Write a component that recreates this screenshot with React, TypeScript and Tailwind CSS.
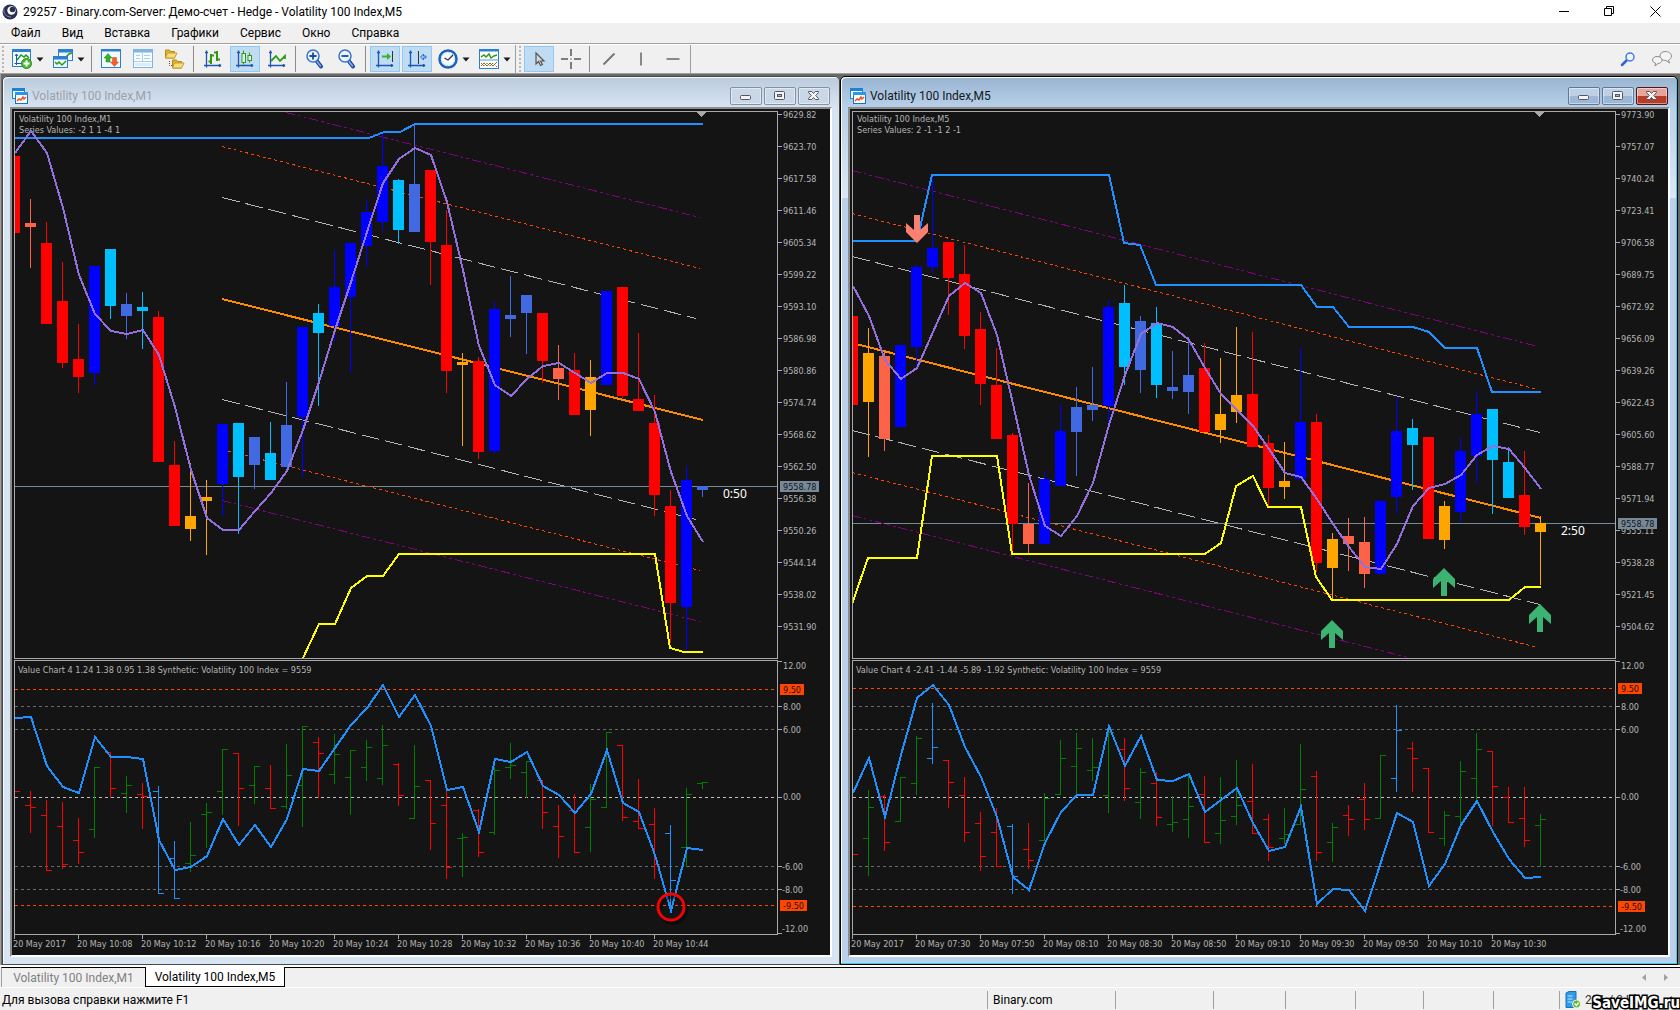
import type { ReactNode } from "react";
import clsx from "clsx";

type Candle = [color: string, high: number, top: number, bottom: number, low: number];
type Bar = [color: string, high: number, low: number, open: number, close: number];
type Point = [x: number, y: number];
type Trend = [x1: number, y1: number, x2: number, y2: number];

interface Arrow {
  x: number;
  y: number;
  down?: boolean;
}

interface ChartData {
  title: string;
  series: string;
  indicator: string;
  timer: string;
  priceY: number;
  prices: string[];
  times: string[];
  candles: Candle[];
  upper: Point[];
  lower: Point[];
  average: number[];
  middle: Trend;
  grey: Trend[];
  orange: Trend[];
  purple: Trend[];
  levels: [number, number];
  bars: Bar[];
  value: number[];
  arrows: Arrow[];
  circle?: Point;
}

// Bars are spaced evenly, one every STEP pixels
const STEP = 16;
const PLOT_W = 763;

const R = "#ff0000";
const B = "#0000ff";
const S = "#00bfff";
const Y = "#4169e1";
const T = "#ff6347";
const O = "#ffa500";
const G = "#008000";
const D = "#1e90ff";

const m1: ChartData = {
  title: "Volatility 100 Index,M1",
  series: "Series Values: -2 1 1 -4 1",
  indicator: "Value Chart 4 1.24 1.38 0.95 1.38 Synthetic: Volatility 100 Index = 9559",
  timer: "0:50",
  priceY: 375,
  prices: [
    "9629.82", "9623.70", "9617.58", "9611.46", "9605.34", "9599.22", "9593.10", "9586.98", "9580.86",
    "9574.74", "9568.62", "9562.50", "9556.38", "9550.26", "9544.14", "9538.02", "9531.90",
  ],
  times: ["2017", "10:08", "10:12", "10:16", "10:20", "10:24", "10:28", "10:32", "10:36", "10:40", "10:44"],
  candles: [
    [R, 45, 45, 122, 122], [T, 88, 112, 116, 157], [R, 111, 132, 213, 213], [R, 151, 190, 252, 257],
    [R, 213, 248, 266, 282], [B, 155, 155, 262, 274], [S, 138, 138, 195, 208], [Y, 182, 193, 205, 228],
    [S, 181, 196, 200, 238], [R, 200, 206, 351, 351], [R, 330, 354, 415, 415], [O, 352, 405, 418, 430],
    [O, 369, 386, 390, 444], [B, 313, 313, 373, 405], [S, 312, 312, 366, 423], [Y, 326, 326, 354, 378],
    [S, 311, 342, 369, 369], [Y, 271, 314, 356, 356], [B, 216, 216, 306, 366], [S, 193, 202, 222, 295],
    [B, 139, 176, 215, 230], [B, 132, 132, 186, 262], [B, 89, 101, 135, 156], [B, 21, 55, 111, 120],
    [S, 68, 69, 119, 133], [Y, 14, 73, 121, 121], [R, 59, 59, 131, 174], [R, 99, 134, 260, 282],
    [O, 242, 251, 254, 335], [R, 246, 250, 341, 348], [B, 191, 198, 340, 343], [Y, 165, 204, 208, 226],
    [Y, 184, 184, 202, 243], [R, 202, 202, 250, 272], [T, 234, 257, 268, 289], [R, 242, 259, 304, 304],
    [O, 249, 266, 299, 325], [B, 180, 180, 274, 274], [R, 176, 176, 285, 287], [R, 222, 288, 300, 300],
    [R, 284, 312, 384, 405], [R, 379, 395, 492, 532], [B, 355, 369, 496, 540], [Y, 375, 375, 379, 386],
  ],
  upper: [[0, 27], [355, 27], [370, 21], [386, 21], [401, 13], [689, 13]],
  lower: [
    [289, 547], [305, 513], [321, 513], [337, 477], [353, 465], [369, 465], [385, 443],
    [641, 443], [656, 537], [670, 541], [689, 541],
  ],
  average: [
    42, 20, 42, 97, 164, 203, 220, 223, 219, 244, 296, 359, 407, 419, 419, 400, 382, 360, 319, 271, 219, 171,
    121, 72, 48, 37, 44, 91, 159, 235, 274, 285, 268, 255, 252, 262, 272, 262, 262, 268, 301, 361, 405, 431,
  ],
  middle: [208, 188, 689, 309],
  grey: [[208, 86, 682, 207], [208, 288, 682, 408]],
  orange: [[208, 35, 686, 157], [208, 338, 686, 459]],
  purple: [[272, 1, 686, 106], [208, 389, 686, 510]],
  levels: [578, 794],
  bars: [
    [R, 680, 680, 680, 680], [R, 680, 721, 694, 696], [R, 689, 759, 704, 759], [R, 691, 757, 715, 753],
    [R, 707, 752, 729, 741], [G, 656, 726, 718, 656], [R, 641, 686, 641, 677], [G, 665, 701, 682, 674],
    [R, 672, 717, 683, 685], [D, 675, 782, 680, 782], [D, 730, 787, 747, 787], [G, 711, 760, 752, 744],
    [G, 692, 736, 703, 701], [G, 638, 703, 680, 638], [R, 642, 714, 642, 677], [G, 655, 692, 674, 655],
    [R, 654, 697, 677, 697], [G, 633, 697, 695, 664], [G, 615, 715, 674, 615], [R, 626, 686, 631, 642],
    [G, 623, 672, 663, 643], [G, 639, 703, 666, 639], [G, 629, 669, 656, 636], [G, 614, 673, 667, 634],
    [R, 652, 694, 653, 684], [G, 634, 707, 707, 675], [R, 669, 738, 669, 712], [R, 680, 767, 694, 756],
    [G, 722, 765, 727, 726], [R, 698, 745, 699, 741], [G, 656, 723, 721, 659], [G, 632, 667, 656, 654],
    [G, 650, 686, 661, 650], [R, 669, 717, 669, 701], [R, 694, 746, 715, 725], [R, 683, 741, 699, 741],
    [G, 673, 740, 716, 688], [G, 621, 696, 696, 621], [R, 634, 709, 634, 706], [R, 668, 717, 710, 717],
    [R, 697, 767, 713, 753], [D, 714, 799, 722, 769], [G, 677, 755, 736, 683], [G, 671, 677, 672, 671],
  ],
  value: [
    607, 606, 655, 676, 682, 626, 646, 646, 648, 729, 759, 756, 745, 708, 734, 714, 736, 708, 658, 660, 637, 614,
    597, 574, 606, 584, 615, 679, 676, 721, 648, 651, 641, 675, 684, 702, 683, 639, 692, 701, 744, 800, 737, 739,
  ],
  arrows: [],
  circle: [657, 796],
};

const m5: ChartData = {
  title: "Volatility 100 Index,M5",
  series: "Series Values: 2 -1 -1 2 -1",
  indicator: "Value Chart 4 -2.41 -1.44 -5.89 -1.92 Synthetic: Volatility 100 Index = 9559",
  timer: "2:50",
  priceY: 412,
  prices: [
    "9773.90", "9757.07", "9740.24", "9723.41", "9706.58", "9689.75", "9672.92", "9656.09", "9639.26",
    "9622.43", "9605.60", "9588.77", "9571.94", "9555.11", "9538.28", "9521.45", "9504.62",
  ],
  times: ["2017", "07:30", "07:50", "08:10", "08:30", "08:50", "09:10", "09:30", "09:50", "10:10", "10:30"],
  candles: [
    [R, 205, 205, 294, 294], [O, 217, 242, 291, 346], [T, 241, 245, 328, 340], [B, 234, 234, 316, 316],
    [B, 153, 156, 236, 255], [B, 66, 137, 156, 162], [R, 131, 131, 167, 204], [R, 134, 163, 225, 238],
    [R, 201, 218, 273, 294], [R, 237, 274, 328, 328], [R, 322, 324, 413, 443], [T, 372, 413, 433, 442],
    [B, 361, 368, 433, 433], [B, 293, 320, 375, 375], [Y, 276, 296, 321, 365], [Y, 256, 294, 299, 310],
    [B, 189, 196, 295, 317], [S, 174, 192, 256, 274], [Y, 205, 210, 259, 282], [S, 196, 212, 274, 287],
    [Y, 240, 276, 280, 288], [Y, 226, 264, 281, 303], [R, 232, 257, 321, 321], [O, 247, 303, 319, 332],
    [O, 216, 284, 301, 312], [R, 221, 283, 336, 336], [R, 324, 332, 377, 395], [O, 331, 370, 376, 388],
    [B, 237, 311, 368, 368], [R, 303, 311, 452, 461], [O, 422, 428, 457, 489], [T, 407, 425, 433, 460],
    [T, 406, 431, 463, 477], [B, 390, 390, 463, 463], [B, 286, 320, 386, 402], [S, 308, 317, 334, 379],
    [R, 326, 326, 428, 428], [O, 390, 395, 429, 438], [B, 327, 340, 401, 411], [B, 281, 303, 345, 372],
    [S, 298, 298, 349, 403], [S, 336, 351, 387, 387], [R, 340, 384, 416, 424], [O, 405, 412, 421, 474],
  ],
  upper: [
    [0, 130], [65, 130], [80, 64], [257, 64], [272, 132], [288, 134], [304, 174], [449, 174], [465, 196],
    [481, 196], [497, 216], [561, 216], [577, 221], [593, 237], [625, 237], [640, 281], [689, 281],
  ],
  lower: [
    [0, 493], [16, 447], [65, 447], [80, 345], [145, 345], [160, 443], [353, 443], [369, 432], [384, 375],
    [401, 365], [416, 396], [449, 396], [464, 466], [480, 489], [657, 489], [673, 476], [689, 476],
  ],
  average: [
    175, 205, 249, 268, 257, 221, 185, 172, 182, 224, 293, 364, 415, 425, 405, 372, 314, 264, 223, 212, 216, 229,
    257, 283, 299, 315, 338, 362, 366, 388, 413, 436, 456, 458, 433, 395, 377, 373, 364, 344, 335, 338, 357, 378,
  ],
  middle: [0, 232, 689, 407],
  grey: [[0, 145, 688, 321], [0, 319, 688, 493]],
  orange: [[0, 102, 686, 278], [0, 361, 686, 536]],
  purple: [[0, 59, 686, 235], [0, 404, 560, 547]],
  levels: [577, 795],
  bars: [
    [R, 743, 743, 743, 743], [G, 679, 764, 727, 696], [R, 683, 739, 685, 731], [G, 666, 710, 710, 666],
    [G, 625, 683, 672, 627], [D, 592, 652, 647, 636], [R, 649, 696, 649, 671], [R, 666, 730, 684, 721],
    [R, 701, 759, 712, 745], [R, 697, 755, 721, 755], [D, 713, 782, 715, 765], [R, 712, 757, 738, 749],
    [G, 682, 729, 729, 687], [G, 629, 683, 683, 647], [G, 622, 683, 655, 637], [G, 627, 669, 659, 656],
    [G, 616, 701, 684, 621], [R, 627, 689, 638, 677], [G, 657, 707, 691, 661], [R, 661, 714, 672, 706],
    [G, 685, 720, 713, 711], [G, 664, 726, 708, 695], [R, 665, 731, 683, 731], [G, 666, 732, 722, 709],
    [G, 649, 713, 705, 694], [R, 653, 722, 690, 722], [R, 703, 749, 708, 736], [G, 697, 732, 727, 723],
    [G, 633, 713, 713, 678], [R, 660, 749, 665, 741], [G, 712, 750, 731, 716], [R, 694, 724, 704, 708],
    [R, 672, 718, 688, 708], [G, 644, 707, 707, 644], [D, 594, 680, 667, 619], [R, 631, 680, 637, 647],
    [R, 657, 721, 657, 721], [G, 700, 734, 727, 704], [G, 650, 716, 705, 660], [G, 622, 689, 667, 638],
    [R, 640, 714, 640, 675], [R, 676, 711, 686, 711], [R, 676, 735, 707, 729], [G, 703, 755, 714, 708],
  ],
  value: [
    682, 647, 706, 644, 587, 574, 594, 636, 666, 706, 766, 779, 732, 701, 684, 684, 615, 655, 625, 669, 670, 663,
    701, 689, 677, 712, 740, 736, 696, 793, 778, 779, 800, 751, 702, 711, 775, 753, 714, 690, 721, 748, 767, 766,
  ],
  arrows: [
    { x: 65, y: 132, down: true },
    { x: 480, y: 509 },
    { x: 592, y: 457 },
    { x: 688, y: 493 },
  ],
};

function toPoints(points: Point[]) {
  return points.map((p) => p.join(",")).join(" ");
}

function spread(values: number[]) {
  return toPoints(values.map((v, i) => [i * STEP + 1, v]));
}

function TrendLines({ lines, color, dash }: { lines: Trend[]; color: string; dash: string }) {
  return (
    <>
      {lines.map(([x1, y1, x2, y2]) => (
        <line key={y1} x1={x1} y1={y1 + 0.5} x2={x2} y2={y2 + 0.5} stroke={color} strokeDasharray={dash} />
      ))}
    </>
  );
}

function Level({ y, color }: { y: number; color: string }) {
  return <line x1="1" x2={PLOT_W} y1={y + 0.5} y2={y + 0.5} stroke={color} strokeDasharray="3 3" />;
}

function Tag({ y, width, color, text }: { y: number; width: number; color: string; text: string }) {
  return (
    <g>
      <rect x="766" y={y - 5} width={width} height="11" fill={color} />
      <text x="769" y={y + 4} className="fill-[#141414]">{text}</text>
    </g>
  );
}

function Chart({ data }: { data: ChartData }) {
  const clip = `plot-${data.timer.replace(":", "")}`;
  const [high, low] = data.levels;

  return (
    <svg
      className="block h-full w-full bg-[#141414] fill-[#b4b4b4] font-['DejaVu_Sans_Condensed','DejaVu_Sans',sans-serif] text-[9px]"
      shapeRendering="crispEdges"
      role="img"
      aria-label={data.title}
    >
      <defs>
        <clipPath id={clip}>
          <rect x="1" y="1" width={PLOT_W - 1} height="546" />
          <rect x="1" y="550" width={PLOT_W - 1} height="273" />
        </clipPath>
      </defs>
      <g transform="translate(2 2)">
        {/* Pane frames */}
        <g fill="none" stroke="#a9a9a9">
          <rect x="0.5" y="0.5" width={PLOT_W} height="547" />
          <rect x="0.5" y="549.5" width={PLOT_W} height="274" />
        </g>
        <text x="5" y="11">{data.title}</text>
        <text x="5" y="22">{data.series}</text>
        <text x="4" y="562">{data.indicator}</text>

        <g clipPath={`url(#${clip})`} fill="none">
          <line x1="1" x2={PLOT_W} y1={data.priceY + 0.5} y2={data.priceY + 0.5} stroke="#778899" />
          <TrendLines lines={data.purple} color="#800080" dash="9 3 3 3 3 3" />
          <TrendLines lines={data.orange} color="#ff4500" dash="3 3" />
          <TrendLines lines={data.grey} color="#b4b4b4" dash="18 6" />
          <polyline
            points={toPoints([[data.middle[0], data.middle[1]], [data.middle[2], data.middle[3]]])}
            stroke="#ff8c00"
            strokeWidth="2"
          />
          {data.candles.map(([color, top, open, close, bottom], i) => (
            <g key={i} fill={color}>
              <rect x={i * STEP} y={top} width="1" height={bottom - top} />
              <rect x={i * STEP - 5} y={open} width="11" height={close - open} />
            </g>
          ))}
          <polyline points={toPoints(data.upper)} stroke="#1e90ff" strokeWidth="2" />
          <polyline points={toPoints(data.lower)} stroke="#ffff00" strokeWidth="2" />
          <polyline points={spread(data.average)} stroke="#9370db" strokeWidth="2" />

          {/* Value chart */}
          <Level y={high} color="#ff4500" />
          <Level y={595} color="#696969" />
          <Level y={618} color="#696969" />
          <Level y={686} color="#c0c0c0" />
          <Level y={755} color="#696969" />
          <Level y={778} color="#696969" />
          <Level y={low} color="#ff4500" />
          {data.bars.map(([color, top, bottom, open, close], i) => (
            <g key={i} fill={color}>
              <rect x={i * STEP} y={top} width="1" height={bottom - top + 1} />
              <rect x={i * STEP - 5} y={open} width="5" height="1" />
              <rect x={i * STEP + 1} y={close} width="5" height="1" />
            </g>
          ))}
          <polyline points={spread(data.value)} stroke="#1e90ff" strokeWidth="2" />
        </g>

        <path d="M682 1h10l-5 5z" fill="#a9a9a9" />
        {data.arrows.map((a) => (
          <path
            key={a.x}
            transform={`translate(${a.x} ${a.y}) scale(1 ${a.down ? -1 : 1})`}
            d="M0 0L11 11V20L3 13V28H-3V13L-11 20V11Z"
            fill={a.down ? "#fa8072" : "#3cb371"}
            shapeRendering="auto"
          />
        ))}
        {data.circle && (
          <g shapeRendering="auto" fill="none">
            <circle cx={data.circle[0] + 2} cy={data.circle[1] + 3} r="13" stroke="#000" strokeOpacity="0.4" strokeWidth="4" />
            <circle cx={data.circle[0]} cy={data.circle[1]} r="13" stroke="#f00404" strokeWidth="3" />
          </g>
        )}
        <text x="709" y={data.priceY + 12} className="fill-white font-['Noto_Sans',sans-serif] text-[12px]">
          {data.timer}
        </text>

        {/* Price scale */}
        {data.prices.map((p, i) => (
          <g key={p}>
            <rect x={PLOT_W + 1} y={i * 32 + 3} width="4" height="1" fill="#a9a9a9" />
            <text x="769" y={i * 32 + 7}>{p}</text>
          </g>
        ))}
        <Tag y={data.priceY} width={39} color="#778899" text="9558.78" />
        {[550, 595, 618, 686, 755, 778, 822].map((y) => (
          <rect key={y} x={PLOT_W + 1} y={y} width="4" height="1" fill="#a9a9a9" />
        ))}
        <text x="769" y="558">12.00</text>
        <text x="769" y="599">8.00</text>
        <text x="769" y="622">6.00</text>
        <text x="769" y="689">0.00</text>
        <text x="768" y="759">-6.00</text>
        <text x="768" y="782">-8.00</text>
        <text x="768" y="821">-12.00</text>
        <Tag y={high} width={24} color="#ff4500" text="9.50" />
        <Tag y={low} width={27} color="#ff4500" text="-9.50" />

        {/* Time scale */}
        {data.times.map((t, i) => (
          <g key={t}>
            <rect x={i * 64} y="824" width="1" height="4" fill="#a9a9a9" />
            <text x={i * 64 - 1} y="836">20 May {t}</text>
          </g>
        ))}
      </g>
    </svg>
  );
}

function ChartIcon() {
  return (
    <svg width="16" height="16" viewBox="0 0 16 16" aria-hidden="true">
      <rect x="0.5" y="0.5" width="12" height="10" fill="#fff" stroke="#1883d7" />
      <rect x="0" y="0" width="13" height="3" fill="#1883d7" />
      <rect x="3.5" y="4.5" width="12" height="11" fill="#fff" stroke="#1274c8" />
      <rect x="3" y="4" width="13" height="3" fill="#2a96ea" />
      <path d="M5 13l2-2 2 1 2-3 1 2 2-2" fill="none" stroke="#f0541e" strokeWidth="1.5" />
    </svg>
  );
}

function WindowButton({ label, active, close, children }: { label: string; active: boolean; close?: boolean; children: ReactNode }) {
  return (
    <button
      aria-label={label}
      className={clsx(
        "flex h-[18px] w-8 items-center justify-center rounded-[2px] border shadow-[inset_0_0_0_1px_rgba(255,255,255,0.45)]",
        active && close && "border-[#4c1520] bg-linear-to-b from-[#e6a59b] from-50% to-[#b53c26] to-50%",
        active && !close && "border-[#5f7899] bg-linear-to-b from-[#bdd0e6] from-50% to-[#9db8d6] to-50%",
        !active && "border-[#8391a9] bg-[#c9d7e6]",
      )}
    >
      <svg width="14" height="12" viewBox="0 0 14 12" fill="#f4f4f4" stroke="#535666" aria-hidden="true">
        {children}
      </svg>
    </button>
  );
}

function ChartWindow({ data, active }: { data: ChartData; active: boolean }) {
  return (
    <section
      className={clsx(
        "flex min-w-0 flex-1 flex-col rounded-t-[5px] border px-[7px] pb-[7px]",
        active
          ? "border-black bg-[linear-gradient(to_bottom,#99b4d1_0px,#b9d1ea_31px,#dbe8f5_121px,#b9d1ea_121px)] shadow-[inset_-1px_-1px_0_#35d0ec,inset_1px_1px_0_#fff]"
          : "border-[#4a4a4a] bg-[#d7e4f2] bg-[linear-gradient(to_bottom,#bccbdc_0px,#d7e4f2_31px)] shadow-[inset_1px_1px_0_#f4f8fc]",
      )}
    >
      <header className="flex h-[30px] shrink-0 items-center gap-1 pr-[2px] pl-[2px] pt-[8px]">
        <ChartIcon />
        <h2 className={clsx("flex-1 text-[12px] leading-4", active ? "text-[#101820]" : "text-[#9aa0a8]")}>{data.title}</h2>
        <div className="flex gap-[2px]">
          <WindowButton label="Свернуть" active={active}>
            <rect x="1.5" y="5.5" width="10" height="4" rx="1" />
          </WindowButton>
          <WindowButton label="Развернуть" active={active}>
            <rect x="1.5" y="1.5" width="10" height="8" rx="1" />
            <rect x="4.5" y="4.5" width="4" height="2" fill="#9db8d6" />
          </WindowButton>
          <WindowButton label="Закрыть" active={active} close>
            <path d="M1.500 1.500h3.200L6.500 3.500l1.800-2h3.200v1L8.700 5.500l2.800 3v1H8.300L6.500 7.500l-1.800 2H1.500v-1l2.800-3-2.800-3z" />
          </WindowButton>
        </div>
      </header>
      <div className="min-h-0 flex-1 border-2 border-t-[#8c8c8c] border-r-white border-b-white border-l-[#8c8c8c]">
        <Chart data={data} />
      </div>
    </section>
  );
}

function ToolButton({ label, active, menu, children }: { label: string; active?: boolean; menu?: boolean; children: ReactNode }) {
  return (
    <button
      aria-label={label}
      className={clsx(
        "flex h-[26px] items-center",
        menu ? "w-[41px] gap-1 pl-[5px]" : "mx-px w-[30px] justify-center border",
        !menu && (active ? "border-[#90c8f6] bg-[#c0dcf3]" : "border-transparent"),
      )}
    >
      <svg width="20" height="20" viewBox="0 0 20 20" fill="none" aria-hidden="true">
        {children}
      </svg>
      {menu && (
        <svg width="8" height="5" viewBox="0 0 8 5" fill="#1a1a1a" aria-hidden="true">
          <path d="M0.500 0.500h7L4 4.500z" />
        </svg>
      )}
    </button>
  );
}

function Separator() {
  return <span className="mr-[3px] ml-[2px] h-[26px] w-px bg-[#8c8c8c]" />;
}

function Grip() {
  return <span className="h-[26px] w-[3px] border-l-2 border-dotted border-[#b8b8b8]" />;
}

function Axes() {
  return (
    <path
      d="M3.500 1.500v17M1 16.500h17M2 3.500h3M16.500 15v3M17.500 15.500v2"
      stroke="#1f55b5"
      strokeWidth="1.300"
    />
  );
}

function Magnifier({ plus }: { plus?: boolean }) {
  return (
    <>
      <path d="M11 11l5 6.500" stroke="#1c4a9e" strokeWidth="4" strokeLinecap="round" />
      <path d="M12 12.500l3.500 4.500" stroke="#7fb2ee" strokeWidth="1.500" strokeLinecap="round" />
      <circle cx="8" cy="7" r="6" fill="#e8f3fe" stroke="#3b74c6" strokeWidth="1.500" />
      <path d={plus ? "M4.500 7h7M8 3.500v7" : "M4.500 7h7"} stroke="#1c4a9e" strokeWidth="1.800" />
    </>
  );
}

function Folder({ x, y }: { x: number; y: number }) {
  return (
    <g transform={`translate(${x} ${y})`}>
      <path d="M0.500 1h4l1 1.500h4V9h-9z" fill="#e0b52e" stroke="#b38a1c" />
      <path d="M2.500 4h9.500L9.500 9h-9z" fill="#f7de7c" stroke="#c59c28" />
    </g>
  );
}

function Toolbar() {
  return (
    <div className="flex h-[29px] items-center border-t border-white bg-[#f0f0f0] pl-[2px]">
      <Grip />
      <span className="w-[2px]" />
      <ToolButton label="Новый график" menu>
        <rect x="0.500" y="0.500" width="18" height="17" fill="#f4faff" stroke="#2d7fd0" />
        <path d="M0 1.500h19" stroke="#2d7fd0" strokeWidth="3" />
        <path d="M4.500 5v11M2.500 14.500h9M3 7l1.500-2L6 7" stroke="#1f55b5" />
        <path d="M5 11l4-5 3 2 2-2 3 3" stroke="#1f9a1f" strokeWidth="1.500" />
        <circle cx="14.500" cy="14.500" r="5" fill="#4bb92f" stroke="#2f8a1c" />
        <path d="M14.500 11.500v6M11.500 14.500h6" stroke="#fff" strokeWidth="2" />
      </ToolButton>
      <ToolButton label="Профили" menu>
        <rect x="5.500" y="0.500" width="14" height="11" fill="#eef7ff" stroke="#2d7fd0" />
        <path d="M5 2h15" stroke="#2d7fd0" strokeWidth="3" />
        <path d="M12 9l4-4 3-1" stroke="#2f9a10" strokeWidth="1.500" />
        <rect x="0.500" y="7.500" width="14" height="11" fill="#eef7ff" stroke="#2d7fd0" />
        <path d="M0 9h15" stroke="#2d7fd0" strokeWidth="3" />
        <path d="M2 13l2 2 2-2 3 3 4-4" stroke="#2f9a10" strokeWidth="1.500" />
      </ToolButton>
      <Separator />
      <ToolButton label="Обзор рынка">
        <rect x="0.500" y="0.500" width="19" height="18" fill="#f2f9ff" stroke="#2d7fd0" />
        <path d="M0 1.500h20" stroke="#2d7fd0" strokeWidth="2" />
        <path d="M7 4.500l4 4.500H9v4H5V9H3z" fill="#35b32a" stroke="#1e8a18" strokeWidth="0.500" />
        <path d="M13.500 17.500L9.500 13h2V8.500h4V13h2z" fill="#f4602f" stroke="#c93e14" strokeWidth="0.500" />
      </ToolButton>
      <ToolButton label="Окно данных">
        <rect x="0.500" y="0.500" width="19" height="18" fill="#f8fcff" stroke="#7db5e6" />
        <path d="M0 2h20" stroke="#7db5e6" strokeWidth="3" />
        <path d="M9.500 3v9M1 12.500h18M3 6.500h4M3 9.500h4M11 6.500h6M11 9.500h6" stroke="#a9cdee" />
        <rect x="2" y="14" width="16" height="3" fill="#dcecf9" />
      </ToolButton>
      <ToolButton label="Навигатор">
        <Folder x={0} y={0} />
        <Folder x={7} y={10} />
        <path d="M4.500 12v4.500H7" stroke="#555" strokeDasharray="1 1" />
      </ToolButton>
      <Separator />
      <ToolButton label="Бары">
        <Axes />
        <path d="M8 5v10M5.500 12.500H8M8 6.500h3M14 2v10M14 3.500h-3M14 10.500h3" stroke="#2f9a10" strokeWidth="2" />
      </ToolButton>
      <ToolButton label="Свечи" active>
        <Axes />
        <path d="M8.500 1.500v14M14.500 3.500v10" stroke="#2f9a10" />
        <rect x="7" y="4.500" width="3.500" height="9" fill="#dff0fb" stroke="#2f9a10" />
        <rect x="13" y="6.500" width="3.500" height="5" fill="#dff0fb" stroke="#2f9a10" />
      </ToolButton>
      <ToolButton label="Линия">
        <Axes />
        <path d="M4 12l5-5 4 5 5-5v3" stroke="#2f9a10" strokeWidth="1.800" />
      </ToolButton>
      <Separator />
      <ToolButton label="Увеличить"><Magnifier plus /></ToolButton>
      <ToolButton label="Уменьшить"><Magnifier /></ToolButton>
      <Separator />
      <ToolButton label="Автопрокрутка" active>
        <Axes />
        <path d="M17.500 2v11" stroke="#333" />
        <path d="M7 6.500h5V4l4 3.500-4 3.500V8.500H7z" fill="#35b32a" />
      </ToolButton>
      <ToolButton label="Сдвиг графика" active>
        <Axes />
        <path d="M11.500 2v13" stroke="#333" />
        <path d="M19 7h-2.500V5l-3 3 3 3V9H19z" fill="#9cc6f5" stroke="#2d6fd0" />
      </ToolButton>
      <ToolButton label="Периоды" menu>
        <circle cx="10" cy="10" r="8.500" fill="#f6fbff" stroke="#1b62be" strokeWidth="2.500" />
        <circle cx="10" cy="10" r="6.500" stroke="#8cbcec" strokeDasharray="1 2.400" />
        <path d="M6.500 9l3.500 2 5-5" stroke="#333" strokeWidth="1.300" />
      </ToolButton>
      <ToolButton label="Шаблоны" menu>
        <rect x="0.500" y="0.500" width="19" height="19" fill="#fff" stroke="#2d7fd0" />
        <path d="M0 1.500h20" stroke="#2d7fd0" strokeWidth="2" />
        <path d="M2 8l3-2 2 2 3-3 2 4 3-2 3-1" stroke="#2f9a10" strokeWidth="1.500" />
        <path d="M1 11h18" stroke="#5b9adb" />
        <path d="M2 17l3-3 3 3 3-3 3 3 4-4" stroke="#2f9a10" />
        <path d="M2 14l3 3 3-3 3 3 3-3 4 4" stroke="#e23b1c" strokeDasharray="2 1" />
      </ToolButton>
      <span className="h-[29px] w-px bg-[#a0a0a0]" />
      <span className="w-[3px]" />
      <Grip />
      <span className="w-px" />
      <ToolButton label="Курсор" active>
        <path d="M7 4v11l2.500-2.500 2 4 2-1-2-3.500H15z" fill="#d8d8d8" stroke="#555" strokeWidth="1.200" />
      </ToolButton>
      <ToolButton label="Перекрестие">
        <path d="M10 0v7M10 13v7M0 10h7M13 10h7M9.500 10h1" stroke="#555" strokeWidth="1.500" />
      </ToolButton>
      <Separator />
      <ToolButton label="Трендовая линия">
        <path d="M4.500 15.500l11-11" stroke="#777" strokeWidth="2" />
      </ToolButton>
      <ToolButton label="Вертикальная линия">
        <path d="M10 3.500v13" stroke="#666" strokeWidth="1.500" />
      </ToolButton>
      <ToolButton label="Горизонтальная линия">
        <path d="M3.500 10h13" stroke="#666" strokeWidth="1.500" />
      </ToolButton>
      <span className="ml-px h-[29px] w-px bg-[#a0a0a0]" />

      <div className="ml-auto flex items-center gap-[2px] pr-[2px]">
        <ToolButton label="Поиск">
          <path d="M9 11l-5 5" stroke="#2f66c8" strokeWidth="2.500" strokeLinecap="round" />
          <circle cx="12" cy="8" r="4" fill="#eef5fd" stroke="#3f7ade" strokeWidth="1.500" />
        </ToolButton>
        <ToolButton label="Чат">
          <path d="M13 2.500c3.500 0 6.500 1.800 6.500 4.500 0 2-1.500 3.500-3 4l1 3-3.500-2.500c-4 0-6-2-6-4.500s2-4.500 5-4.500z" fill="#f4f4f4" stroke="#8c8c8c" />
          <path d="M5 7.500c3 0 5 1.500 5 3.500s-2 3.500-4 3.500L3 17l.5-3C1.500 13.500.5 12.500.5 11c0-2 2-3.500 4.500-3.500z" fill="#f4f4f4" stroke="#8c8c8c" />
        </ToolButton>
      </div>
    </div>
  );
}

const menu = ["Файл", "Вид", "Вставка", "Графики", "Сервис", "Окно", "Справка"];

function TitleBar() {
  return (
    <header className="flex h-[23px] items-center bg-white pr-px pl-[2px]">
      <svg width="16" height="16" viewBox="0 0 16 16" aria-hidden="true">
        <circle cx="8" cy="8" r="7.500" fill="#2a3052" />
        <circle cx="9.500" cy="6.500" r="4.200" fill="#fff" />
        <circle cx="10.500" cy="5.500" r="2.800" fill="#2a3052" />
        <path d="M2 5c-1 4 2 8 7 8" fill="none" stroke="#8a90a8" />
      </svg>
      <h1 className="ml-[5px] flex-1 text-[12px] leading-4">
        29257 - Binary.com-Server: Демо-счет - Hedge - Volatility 100 Index,M5
      </h1>
      <div className="flex h-full items-center">
        <button aria-label="Свернуть" className="flex h-full w-[45px] items-center justify-center">
          <svg width="11" height="11" stroke="#000"><path d="M0 5.500h10" /></svg>
        </button>
        <button aria-label="Восстановить" className="flex h-full w-[45px] items-center justify-center">
          <svg width="11" height="11" fill="none" stroke="#000"><path d="M0.500 2.500h7v7h-7zM2.500 2.500v-2h7v7h-2" /></svg>
        </button>
        <button aria-label="Закрыть" className="flex h-full w-[47px] items-center justify-center">
          <svg width="11" height="11" stroke="#000"><path d="M0.500 0.500l10 10M10.500 0.500l-10 10" /></svg>
        </button>
      </div>
    </header>
  );
}

function Tabs() {
  return (
    <nav className="flex h-5 shrink-0 items-stretch pl-[1px] text-[12px] leading-4">
      <button className="w-36 border-t border-l border-t-black border-l-[#a0a0a0] text-[#808080]">Volatility 100 Index,M1</button>
      <button className="w-[140px] border border-t-0 border-black bg-white">Volatility 100 Index,M5</button>
      <div className="flex flex-1 items-center justify-end gap-[18px] border-t border-black pr-3">
        <button aria-label="Назад">
          <svg width="4" height="7" fill="#a0a0a0"><path d="M4 0v7L0 3.500z" /></svg>
        </button>
        <button aria-label="Вперед">
          <svg width="4" height="7" fill="#a0a0a0"><path d="M0 0v7l4-3.500z" /></svg>
        </button>
      </div>
    </nav>
  );
}

function StatusBar() {
  return (
    <footer className="relative flex h-[23px] shrink-0 items-center border-t border-white pt-[2px] text-[12px] leading-4">
      <p className="flex-1 pl-[2px]">Для вызова справки нажмите F1</p>
      <p className="h-[18px] w-32 border-l border-[#a0a0a0] pl-[5px] leading-[18px]">Binary.com</p>
      <span className="h-[18px] w-[98px] border-l border-[#a0a0a0]" />
      <span className="h-[18px] w-[72px] border-l border-[#a0a0a0]" />
      <span className="h-[18px] w-[70px] border-l border-[#a0a0a0]" />
      <span className="h-[18px] w-[68px] border-l border-[#a0a0a0]" />
      <span className="h-[18px] w-[70px] border-l border-[#a0a0a0]" />
      <span className="h-[18px] w-[66px] border-l border-[#a0a0a0]" />
      <p className="flex h-[18px] w-[121px] items-center gap-1 border-l border-[#a0a0a0] pl-[5px] text-[#333]">
        <svg width="16" height="18" viewBox="0 0 16 18" aria-hidden="true">
          <path d="M1 2l3-1.500h7v14L8 16.500H1z" fill="#2f9be6" stroke="#1572b8" />
          <path d="M2.500 5h5M2.500 8h5M2.500 11h5" stroke="#c6e6fb" />
          <circle cx="11.500" cy="13" r="4" fill="#5cb52e" stroke="#e8f6e0" />
          <path d="M9.500 12.500l2 2 2-3" fill="none" stroke="#fff" strokeWidth="1.500" />
        </svg>
        231 / 0 Kb
      </p>
      <span className="absolute right-0 -bottom-px font-['DejaVu_Sans_Condensed','DejaVu_Sans',sans-serif] text-[15px] font-bold leading-4 text-white [-webkit-text-stroke:3px_#000] [paint-order:stroke_fill]">
        SaveIMG.ru
      </span>
    </footer>
  );
}

export default function App() {
  return (
    <div className="flex h-screen flex-col overflow-hidden bg-[#f0f0f0] font-[Roboto,'Noto_Sans',sans-serif] text-black select-none">
      <TitleBar />
      <nav className="flex h-5 items-center gap-[21px] pl-[11px] text-[12px] leading-4">
        {menu.map((item) => (
          <button key={item}>{item}</button>
        ))}
      </nav>
      <div className="border-t border-[#a0a0a0]">
        <Toolbar />
      </div>
      <main className="flex min-h-0 flex-1 border-t border-l border-[#a0a0a0] bg-[#696969] pt-[2px] pr-[2px] pl-[1px]">
        <ChartWindow data={m1} active={false} />
        <ChartWindow data={m5} active />
      </main>
      <div className="h-[2px] shrink-0 bg-white" />
      <Tabs />
      <StatusBar />
    </div>
  );
}
